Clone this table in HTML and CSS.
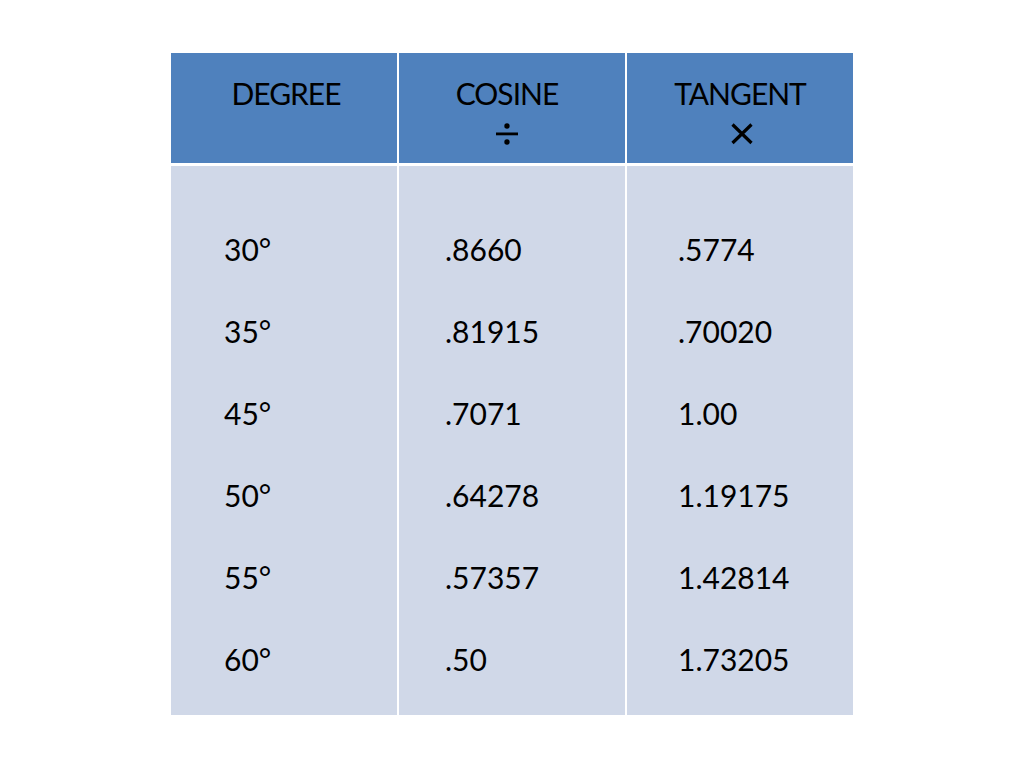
FILE: index.html
```html
<!DOCTYPE html>
<html lang="en">
<head>
<meta charset="utf-8">
<title>Trig table</title>
<link rel="stylesheet" href="styles.css">
</head>
<body>
<div class="page">
  <div class="table">
    <div class="head c1"><div class="label">DEGREE</div></div>
    <div class="head c2">
      <div class="label">COSINE</div>
      <svg class="sym" width="24" height="22" viewBox="0 0 24 22" aria-label="÷">
        <circle cx="12" cy="3" r="2.7" fill="#000"/>
        <rect x="1" y="9.5" width="22" height="2.8" fill="#000"/>
        <circle cx="12" cy="19" r="2.7" fill="#000"/>
      </svg>
    </div>
    <div class="head c3">
      <div class="label">TANGENT</div>
      <svg class="sym" width="24" height="22" viewBox="0 0 24 22" aria-label="×">
        <path d="M2.5 1.5 L21.5 20 M21.5 1.5 L2.5 20" stroke="#000" stroke-width="3.2" fill="none"/>
      </svg>
    </div>
    <div class="cell c1">
      <div>30°</div><div>35°</div><div>45°</div><div>50°</div><div>55°</div><div>60°</div>
    </div>
    <div class="cell c2">
      <div>.8660</div><div>.81915</div><div>.7071</div><div>.64278</div><div>.57357</div><div>.50</div>
    </div>
    <div class="cell c3">
      <div>.5774</div><div>.70020</div><div>1.00</div><div>1.19175</div><div>1.42814</div><div>1.73205</div>
    </div>
  </div>
</div>
</body>
</html>
```

FILE: styles.css
```css
html, body {
  margin: 0;
  padding: 0;
  background: #ffffff;
}
body {
  font-family: Lato, "Open Sans", "Liberation Sans", sans-serif;
  color: #000;
}
.page {
  padding: 53px 0 0 171px;
}
.table {
  display: grid;
  grid-template-columns: 226px 226px 226px;
  grid-template-rows: 110px 549px;
  column-gap: 2px;
  row-gap: 3px;
  width: 682px;
  background: #ffffff;
}
.head {
  background: #4f81bd;
  display: flex;
  flex-direction: column;
  align-items: center;
  padding-top: 22px;
  font-size: 30px;
  line-height: 36px;
  box-sizing: border-box;
}
.label {
  letter-spacing: -1px;
}
.head.c1 { padding-left: 4px; }
.head.c2 { padding-right: 10px; }
.sym {
  display: block;
  margin-top: 12px;
}
.head.c3 .sym { margin-left: 4px; }
.cell {
  background: #d0d8e8;
  font-size: 30px;
  line-height: 82px;
  padding-top: 42px;
  box-sizing: border-box;
}
.cell.c1 { padding-left: 53px; }
.cell.c2 { padding-left: 46px; }
.cell.c3 { padding-left: 51px; }
```
